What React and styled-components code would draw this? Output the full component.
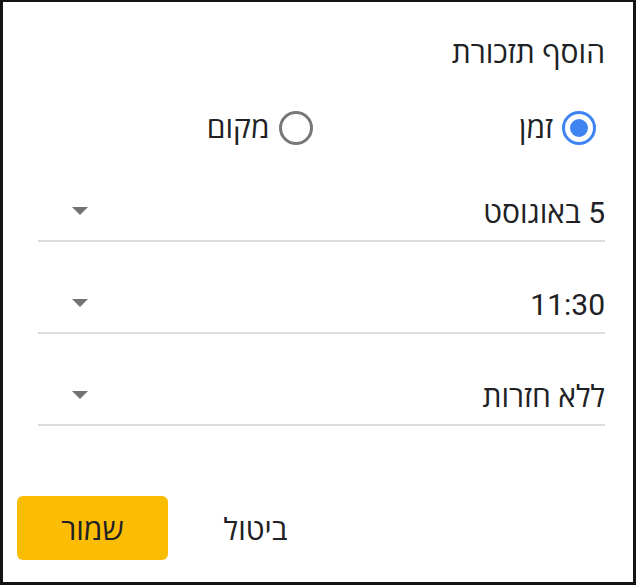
import React from 'react';
import styled, { createGlobalStyle } from 'styled-components';

const GlobalStyle = createGlobalStyle`
  html, body {
    margin: 0;
    padding: 0;
    background: #ffffff;
  }
  body {
    font-family: Roboto, "Open Sans", "Noto Sans", "DejaVu Sans", sans-serif;
    color: #202124;
  }
`

const Frame = styled.div`
  box-sizing: border-box;
  width: 636px;
  height: 585px;
  border: 3px solid #141414;
  border-top-width: 2px;
  background: #ffffff;
  direction: rtl;
  display: flex;
  flex-direction: column;
`

const Content = styled.div`
  padding: 33px 28px 0 35px;
  display: flex;
  flex-direction: column;
`

const Title = styled.h1`
  margin: 0;
  font-size: 30px;
  font-weight: 400;
  line-height: 36px;
`

const RadioGroup = styled.div`
  display: grid;
  grid-template-columns: 1fr 1fr;
  height: 48px;
  margin-top: 33px;
`

const RadioItem = styled.label`
  display: flex;
  align-items: center;
  gap: 9px;
  padding-inline-start: 9px;
  font-size: 30px;
  line-height: 36px;
`

const RadioCircle = styled.span`
  box-sizing: border-box;
  width: 34px;
  height: 34px;
  border-radius: 50%;
  border: 3px solid ${props => props.checked ? '#3d84f2' : '#777777'};
  display: flex;
  align-items: center;
  justify-content: center;

  &::after {
    content: '';
    width: 18px;
    height: 18px;
    border-radius: 50%;
    background: #3d84f2;
    display: ${props => props.checked ? 'block' : 'none'};
  }
`

const Field = styled.div`
  display: flex;
  align-items: center;
  justify-content: space-between;
  height: 54px;
  margin-top: ${props => props.first ? '34px' : '36px'};
  border-bottom: 2px solid #dcdcdc;
  font-size: 30px;
  line-height: 36px;
`

const Arrow = styled.span`
  width: 0;
  height: 0;
  border-left: 8px solid transparent;
  border-right: 8px solid transparent;
  border-top: 8px solid #737373;
  margin-inline-end: 34px;
  margin-bottom: 4px;
`

const Actions = styled.div`
  display: flex;
  justify-content: flex-end;
  gap: 12px;
  margin-top: 70px;
  padding-inline-end: 14px;
`

const Button = styled.button`
  box-sizing: border-box;
  width: 151px;
  height: 64px;
  border: none;
  border-radius: 6px;
  background: ${props => props.primary ? '#fbbc04' : 'transparent'};
  color: #202124;
  font-family: inherit;
  font-size: 30px;
  cursor: pointer;
`

const fields = ['5 באוגוסט', '11:30', 'ללא חזרות']

export default function App() {
  return (
    <>
      <GlobalStyle />
      <Frame>
        <Content>
          <Title>הוסף תזכורת</Title>
          <RadioGroup>
            <RadioItem><RadioCircle checked />זמן</RadioItem>
            <RadioItem><RadioCircle />מקום</RadioItem>
          </RadioGroup>
          {fields.map((f, i) => (
            <Field key={f} first={i === 0}>
              <span>{f}</span>
              <Arrow />
            </Field>
          ))}
        </Content>
        <Actions>
          <Button>ביטול</Button>
          <Button primary>שמור</Button>
        </Actions>
      </Frame>
    </>
  )
}
